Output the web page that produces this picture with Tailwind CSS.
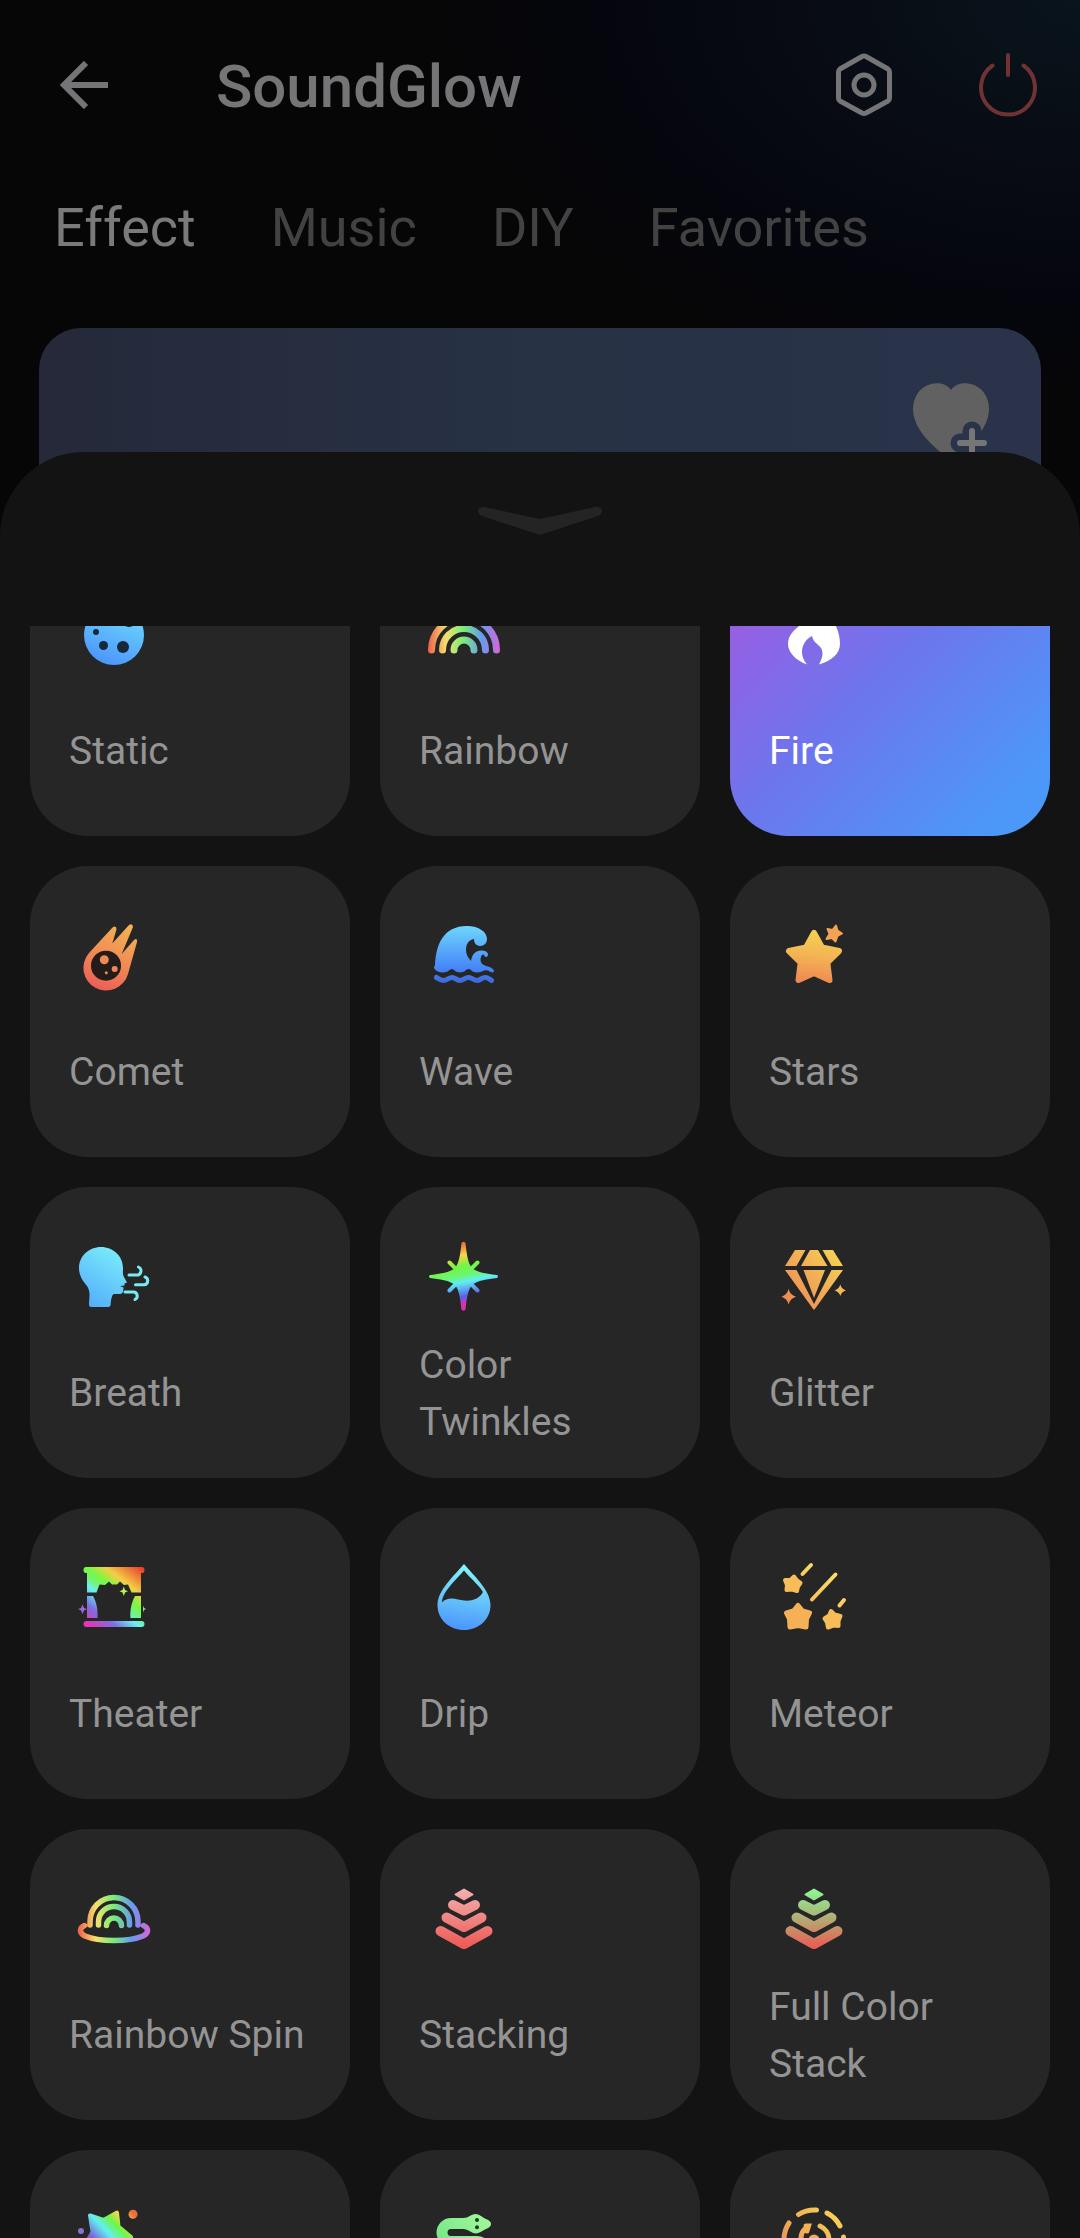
<!DOCTYPE html>
<html lang="en">
<head>
    <meta charset="UTF-8">
    <meta name="viewport" content="width=device-width, initial-scale=1.0">
    <title>SoundGlow</title>
    <script src="https://cdn.jsdelivr.net/npm/@tailwindcss/browser@4"></script>
    <style>
        body { font-family: Roboto, 'Liberation Sans', sans-serif; }
        .card { background: #262626; color: #949494; border-radius: 58px; height: 291px; padding: 45px 38px 13px 39px; display: flex; flex-direction: column; text-align: left; font-size: 39px; line-height: 57px; }
        .card.active { background: linear-gradient(135deg, #a957dc 0%, #9560e4 15%, #6e75ec 45%, #4c98f8 88%); color: #fff; }
        .card svg { width: 90px; height: 90px; flex: none; }
        .card span { flex: 1; display: flex; align-items: center; }
    </style>
</head>
<body class="h-screen overflow-hidden flex flex-col bg-[#060607] bg-[radial-gradient(ellipse_640px_400px_at_100%_0%,#09141c_0%,#080b13_45%,#05060d_75%,#060607_100%)]">

    <!-- shared gradients for the effect icons -->
    <svg class="absolute w-0 h-0" aria-hidden="true">
        <defs>
            <linearGradient id="blue" gradientUnits="userSpaceOnUse" x1="58" y1="15" x2="34" y2="76"><stop offset="0" stop-color="#6fdcff"/><stop offset="1" stop-color="#4a93fb"/></linearGradient>
            <linearGradient id="wave" gradientUnits="userSpaceOnUse" x1="45" y1="15" x2="45" y2="72"><stop offset="0" stop-color="#6fd6fd"/><stop offset=".75" stop-color="#4585f8"/><stop offset="1" stop-color="#3d68d6"/></linearGradient>
            <linearGradient id="breath" gradientUnits="userSpaceOnUse" x1="60" y1="20" x2="25" y2="76"><stop offset="0" stop-color="#7cf0fa"/><stop offset="1" stop-color="#55aefc"/></linearGradient>
            <linearGradient id="drip" gradientUnits="userSpaceOnUse" x1="52" y1="11" x2="42" y2="77"><stop offset="0" stop-color="#85fafa"/><stop offset="1" stop-color="#4b95fb"/></linearGradient>
            <linearGradient id="comet" gradientUnits="userSpaceOnUse" x1="60" y1="13" x2="32" y2="79"><stop offset="0" stop-color="#f4b454"/><stop offset=".5" stop-color="#f08f54"/><stop offset="1" stop-color="#ec5f56"/></linearGradient>
            <linearGradient id="stars" gradientUnits="userSpaceOnUse" x1="48" y1="17" x2="42" y2="74"><stop offset="0" stop-color="#f6d552"/><stop offset=".5" stop-color="#f3b354"/><stop offset="1" stop-color="#ee8453"/></linearGradient>
            <linearGradient id="gold" gradientUnits="userSpaceOnUse" x1="74" y1="18" x2="18" y2="68"><stop offset="0" stop-color="#f8d757"/><stop offset="1" stop-color="#ec8a54"/></linearGradient>
            <linearGradient id="meteor" gradientUnits="userSpaceOnUse" x1="68" y1="20" x2="22" y2="74"><stop offset="0" stop-color="#f9e065"/><stop offset="1" stop-color="#f6a552"/></linearGradient>
            <linearGradient id="arc" gradientUnits="userSpaceOnUse" x1="9" y1="45" x2="81" y2="45"><stop offset="0" stop-color="#ed604f"/><stop offset=".25" stop-color="#f5e06c"/><stop offset=".48" stop-color="#7bee78"/><stop offset=".75" stop-color="#669af0"/><stop offset="1" stop-color="#d665d8"/></linearGradient>
            <linearGradient id="twinkle" gradientUnits="userSpaceOnUse" x1="37" y1="10" x2="51" y2="79"><stop offset="0" stop-color="#ec5a3a"/><stop offset=".2" stop-color="#f3d548"/><stop offset=".35" stop-color="#72f545"/><stop offset=".48" stop-color="#6cf66c"/><stop offset=".58" stop-color="#60eef5"/><stop offset=".78" stop-color="#5b61e8"/><stop offset=".9" stop-color="#e030a8"/></linearGradient>
            <linearGradient id="prism" gradientUnits="userSpaceOnUse" x1="72" y1="14" x2="25" y2="76"><stop offset="0" stop-color="#ea3d2b"/><stop offset=".28" stop-color="#f3cf45"/><stop offset=".43" stop-color="#76f943"/><stop offset=".52" stop-color="#74f27a"/><stop offset=".62" stop-color="#6af0f8"/><stop offset=".8" stop-color="#7b6fe0"/><stop offset="1" stop-color="#e834b4"/></linearGradient>
            <linearGradient id="pop" gradientUnits="userSpaceOnUse" x1="64" y1="18" x2="22" y2="58"><stop offset="0" stop-color="#ed6c3c"/><stop offset=".2" stop-color="#f2d64a"/><stop offset=".35" stop-color="#6ef646"/><stop offset=".55" stop-color="#63eef2"/><stop offset=".8" stop-color="#7a62d8"/><stop offset="1" stop-color="#d63ab8"/></linearGradient>
            <linearGradient id="red" gradientUnits="userSpaceOnUse" x1="45" y1="15" x2="45" y2="75"><stop offset="0" stop-color="#f2b0b0"/><stop offset="1" stop-color="#ee5753"/></linearGradient>
            <linearGradient id="greenred" gradientUnits="userSpaceOnUse" x1="45" y1="15" x2="45" y2="75"><stop offset="0" stop-color="#8df895"/><stop offset=".3" stop-color="#9fcb83"/><stop offset=".6" stop-color="#bf9a6b"/><stop offset="1" stop-color="#ee5753"/></linearGradient>
            <linearGradient id="snake" gradientUnits="userSpaceOnUse" x1="70" y1="20" x2="20" y2="60"><stop offset="0" stop-color="#a5f79a"/><stop offset="1" stop-color="#6de685"/></linearGradient>
        </defs>
    </svg>

    <header class="h-[170px] shrink-0 flex items-center pl-12 pr-9 text-[#757577]">
        <button type="button" aria-label="Back" class="size-[72px] flex items-center justify-center">
            <svg class="size-12" viewBox="0 0 48 48" fill="none" stroke="currentColor" stroke-width="6"><path d="M26 2 4 24 26 46M4 24H48"/></svg>
        </button>
        <h1 class="ml-24 pt-1 flex-1 text-[60px] font-medium">SoundGlow</h1>
        <div class="flex gap-[72px]">
            <button type="button" aria-label="Settings" class="size-[72px]">
                <svg class="size-[72px]" viewBox="0 0 72 72" fill="none" stroke="currentColor" stroke-width="5" stroke-linejoin="round"><path d="M34 7.500Q36 6.500 38 7.500L60 20Q61.500 21 61.500 23V49Q61.500 51 60 52L38 64Q36 65 34 64L12 52Q10.500 51 10.500 49V23Q10.500 21 12 20Z"/><circle cx="36" cy="36" r="10"/></svg>
            </button>
            <button type="button" aria-label="Power" class="size-[72px] text-[#703233]">
                <svg class="size-[72px]" viewBox="0 0 72 72" fill="none" stroke="currentColor" stroke-width="4" stroke-linecap="round"><path d="M36 6V26M20.500 16.500A27 27 0 1 0 51.500 16.500"/></svg>
            </button>
        </div>
    </header>

    <nav class="h-[114px] shrink-0 flex items-center gap-[75px] px-[54px] text-[54px] text-[#424243]">
        <a href="#" class="text-[#7a7a7a]">Effect</a>
        <a href="#">Music</a>
        <a href="#">DIY</a>
        <a href="#">Favorites</a>
    </nav>

    <section class="mt-11 mx-[39px] h-[210px] shrink-0 rounded-[42px] flex justify-end pt-[52px] pr-[50px] bg-linear-to-r from-[#25293a] via-[#273245] to-[#2a334a]">
        <button type="button" aria-label="Add to favorites" class="size-20">
            <svg class="size-20" viewBox="0 0 80 80">
                <path fill="#616161" d="M40 10C34 2 25 3 20 4C8 7 2 18 2 29C2 48 20 66 40 80C60 66 78 48 78 29C78 18 72 7 60 4C55 3 46 2 40 10Z"/>
                <path fill="none" stroke="#29334a" stroke-width="19" stroke-linecap="round" d="M61 51V75M49 63H73"/>
                <path fill="none" stroke="#767676" stroke-width="6" stroke-linecap="round" d="M61 51V75M49 63H73"/>
            </svg>
        </button>
    </section>

    <main class="relative -mt-[86px] flex-1 min-h-0 flex flex-col rounded-t-[84px] bg-[#131313]">
        <button type="button" aria-label="Collapse" class="h-[138px] mb-9 shrink-0 flex items-center justify-center">
            <svg class="w-[124px] h-[30px]" viewBox="0 0 124 30"><path fill="#242424" d="M6 1Q0 1 0 5Q0 8 4 10L59 28Q62 29.500 65 28L120 10Q124 8 124 5Q123 0 117 1L62 13Z"/></svg>
        </button>

        <div class="flex-1 min-h-0 overflow-hidden px-[30px]">
            <!-- list is scrolled part of a row down -->
            <div class="-mt-[81px] grid grid-cols-3 gap-[30px]">
                <button type="button" class="card">
                    <svg viewBox="0 0 90 90"><circle cx="45" cy="45" r="30" fill="url(#blue)"/><g fill="#16283a"><circle cx="27" cy="42" r="3"/><circle cx="34.500" cy="55.500" r="4.500"/><circle cx="54" cy="57" r="6"/><circle cx="60" cy="30" r="7"/></g></svg>
                    <span>Static</span>
                </button>
                <button type="button" class="card">
                    <svg viewBox="0 0 90 90" fill="none" stroke="url(#arc)" stroke-width="7" stroke-linecap="round"><path d="M12.500 60A32.500 32.500 0 0 1 77.500 60M23.500 60A21.500 21.500 0 0 1 66.500 60M35 60A10 10 0 0 1 55 60"/></svg>
                    <span>Rainbow</span>
                </button>
                <button type="button" class="card active">
                    <svg viewBox="0 0 90 90" fill="#fff"><path d="M38 74.500C26 70 19 62 19 54C19 46 24 41 30 36C38 28 42 21 42 12C54 18 56 26 57 33C60 31 61 29 61 26C67 34 71 44 71 54C71 64 62 71 50 74.500C53 69 55 63 52 58C49 54 44 52 43 46C37 49 33 55 33 62C33 67 35 71 38 74.500Z"/></svg>
                    <span>Fire</span>
                </button>

                <button type="button" class="card">
                    <svg viewBox="0 0 90 90"><path fill="url(#comet)" d="M20 42L43.500 16.500Q47.500 14 47.500 18.500L43.300 32.500L59.500 14.500Q63.500 11.500 64 16L52.700 43L65 29Q68.500 26.500 68 31L59 63A22.700 22.700 0 1 1 20 42Z"/><circle cx="37" cy="54.700" r="15" fill="#241c1b"/><g fill="#f08a54"><circle cx="35.300" cy="48.700" r="4.500"/><circle cx="45.700" cy="58" r="3"/><circle cx="37.300" cy="61.700" r="1.500"/></g></svg>
                    <span>Comet</span>
                </button>
                <button type="button" class="card">
                    <svg viewBox="0 0 90 90"><path fill="url(#wave)" d="M16 54C17 34 24 15 48 15C60 15 68 21 68 28C68 32 65 35 61.500 35C58 35 55 33 55 28C49 29 47 34 47 39C47 43 49 47 52 50C53 43 57 39.500 62 39.500C66 39.500 69 41 69 43.500C69 45 68 46 67 46C65 46 66 43.500 64 43.500C62 44 61.500 47 61.500 49C62 54 66 54.500 69 55.500C73 57 75 58 75 60.500C74 62.500 71 61 69 59.500C65 58 63 61.500 58 61.500C53 61.500 52 58 49.500 58C47 58 46 61.500 41 61.500C36 61.500 35 58 33 58C31 58 29 61.500 24 61.500C19 61.500 15 59 15 56Z"/><path fill="none" stroke="url(#wave)" stroke-width="5" stroke-linecap="round" d="M17.500 66.500C20 68 21 69.500 24.500 69.500S30 66.500 33 66.500S38 69.500 41 69.500S46 66.500 49.500 66.500S55 69.500 58 69.500S63 66.500 66 66.500S70 68 72.500 69.500"/></svg>
                    <span>Wave</span>
                </button>
                <button type="button" class="card">
                    <svg viewBox="0 0 90 90" fill="url(#stars)" stroke="url(#stars)" stroke-linejoin="round"><path stroke-width="6" d="M45 22L53 36.500L70 40L58.300 51.500L60.500 69L45 62L29.500 69L31.700 51.500L20 40L37 36.500Z"/><path fill="#f2a354" stroke="#f2a354" stroke-width="2" d="M67 14.500L68.500 19.500L73 22.500L68.500 25L66.500 30.500L63 27L57.500 28L60.500 23L58.500 18L63.500 19Z"/></svg>
                    <span>Stars</span>
                </button>

                <button type="button" class="card">
                    <svg viewBox="0 0 90 90"><path fill="url(#breath)" d="M20 72C20 66 22 60 18 54C13 48 10 43 10 36C10 24 20 15 32 15C44 15 54 24 54 36C54 41 53.500 42 55 45L58 50.500L55.500 51.500L55.500 53.500L51 54L54.500 55.500C54.500 61 53 62 50 62L45 62C43 62 42 68 41.700 72Q41.700 75 39 75L22 75Q20 75 20 72Z"/><path fill="none" stroke="#7aeaf5" stroke-width="3" stroke-linecap="round" d="M60 43H69A4.300 4.300 0 0 0 69.500 35M66.500 52.700H75.500A4 4 0 0 0 76 45M56 60H65A4 4 0 0 1 66 67.500"/></svg>
                    <span>Breath</span>
                </button>
                <button type="button" class="card">
                    <svg viewBox="0 0 90 90" fill="url(#twinkle)"><path d="M42.500 11Q44.500 8.500 46.500 11C47.500 20 48.500 31 53 36C58 40.500 69 42 78 43Q80 44.500 78 46C69 47 58 48.500 53 53C48.500 58 47.500 69 46.500 77.500Q44.500 80 42.500 77.500C41.500 69 40.500 58 36 53C31 48.500 20 47 11 46Q9 44.500 11 43C20 42 31 40.500 36 36C40.500 31 41.500 20 42.500 11Z"/><path fill="none" stroke="url(#twinkle)" stroke-width="4" stroke-linecap="round" d="M30.500 30.500L58.500 58.500M58.500 30.500L30.500 58.500"/></svg>
                    <span>Color Twinkles</span>
                </button>
                <button type="button" class="card">
                    <svg viewBox="0 0 90 90" fill="url(#gold)"><path d="M26 18H36.500L27.500 34H16ZM41 18H49L58.500 34H32ZM53.500 18H64L74 34H62.500ZM16 38H27.500L45 72L62.500 38H74L45.500 77.500H44.500ZM34.500 38H56L45 66ZM19.600 57Q21 63 27 64.700Q21 66.500 19.600 72.500Q18 66.500 12.500 64.700Q18 63 19.600 57ZM71.300 52.500Q72.500 57 77 58.300Q72.500 60 71.300 64Q70 60 65.500 58.300Q70 57 71.300 52.500Z"/></svg>
                    <span>Glitter</span>
                </button>

                <button type="button" class="card">
                    <svg viewBox="0 0 90 90" fill="url(#prism)"><path d="M17 14H73Q75.500 14 75.500 17T73 20H72V39.500H62.500L59 31.500L55 32L51 28.500L48 31.500H43L40 28.500L36 32L30.500 31.500L27.500 39.500H18V20H17Q14.500 20 14.500 17T17 14ZM18 43H24C28 50 29 58 28.500 65H18ZM72 43H66C62 50 61 58 61.500 65H72ZM17.500 68H72.500Q75.500 68 75.500 71T72.500 74H17.500Q14.500 74 14.500 71T17.500 68Z"/><path d="M54.800 33.500L56 37L59 38.300L56 39.500L54.800 43L53.500 39.500L50.500 38.300L53.500 37Z" fill="#b6f25c"/><path d="M13.500 51.500L15 55L18 56L15 57.500L13.500 61L12 57.500L9 56L12 55Z" fill="#9a68d6"/><path d="M74 52.500L75 55L77 56L75 57L74 59.500Z" fill="#7bf06b"/></svg>
                    <span>Theater</span>
                </button>
                <button type="button" class="card">
                    <svg viewBox="0 0 90 90" fill="url(#drip)"><path fill-rule="evenodd" d="M45 11C54 22 71.500 37 71.500 52C71.500 67 59 77 45 77S18.500 67 18.500 52C18.500 37 36 22 45 11ZM45 17.500C37 27 23 39 23 49.500C27 45 33 45 39 46.500C49 49 59 48 64 39C59 31 51 25 45 17.500Z"/></svg>
                    <span>Drip</span>
                </button>
                <button type="button" class="card">
                    <svg viewBox="0 0 90 90" fill="#f6bd58" stroke="#f6bd58" stroke-linejoin="round" stroke-linecap="round"><path stroke-width="4" stroke="url(#meteor)" fill="none" d="M33.500 21L42 12M43 46.500L66.500 21.500M70.500 52.500L75 47"/><path stroke-width="4" d="M25 23.500L28 27.500L31.500 30L29 33.500L28 38L23 36.500L17.500 37L18 32L16 27L21.500 27Z"/><path fill="#f6b156" stroke="#f6b156" stroke-width="5" d="M29 52.500L33.500 58L40.500 60L37.500 66L37 74L29 72.500L21 74L20.500 66L17.500 60L24.500 58Z"/><path stroke-width="4" d="M62 58L65.500 61.500L71.500 63L69.500 68L69.500 73L64.500 72.500L59 74.500L58 69.500L55.500 65.500L60 62.500Z"/></svg>
                    <span>Meteor</span>
                </button>

                <button type="button" class="card">
                    <svg viewBox="0 0 90 90" fill="none" stroke="url(#arc)" stroke-width="5.500" stroke-linecap="round"><path d="M21 51V47.500A24 24 0 0 1 69 47.500V51M29.500 51V48A15.500 15.500 0 0 1 60.500 48V51M37.500 51.500A7.500 7.500 0 0 1 52.500 51.500M15.500 51.500C10 54 10 59 16 62C30 68 60 68 74 62C80 59 80 54 74.500 51.500"/></svg>
                    <span>Rainbow Spin</span>
                </button>
                <button type="button" class="card">
                    <svg viewBox="0 0 90 90" fill="none" stroke="url(#red)" stroke-width="10" stroke-linecap="round" stroke-linejoin="round"><path fill="url(#red)" stroke-width="2" d="M45 15.500L53.500 20.500L45 25.500L36.500 20.500Z"/><path d="M34 31L45 36.500L56 31M27.500 43.500L45 53L62.500 43.500M21.500 57L45 70L68.500 57"/></svg>
                    <span>Stacking</span>
                </button>
                <button type="button" class="card">
                    <svg viewBox="0 0 90 90" fill="none" stroke="url(#greenred)" stroke-width="10" stroke-linecap="round" stroke-linejoin="round"><path fill="url(#greenred)" stroke-width="2" d="M45 15.500L53.500 20.500L45 25.500L36.500 20.500Z"/><path d="M34 31L45 36.500L56 31M27.500 43.500L45 53L62.500 43.500M21.500 57L45 70L68.500 57"/></svg>
                    <span>Full Color Stack</span>
                </button>

                <button type="button" class="card">
                    <svg viewBox="0 0 90 90" fill="url(#pop)"><path stroke="url(#pop)" stroke-width="4" stroke-linejoin="round" d="M21 20.500L34.500 25L48 17.500L49.500 31.500L62 42L48 47L42 62L32 51L15 52L23.500 37Z"/><circle cx="64" cy="19.300" r="4.500"/><circle cx="12" cy="36" r="3" fill="#8a70d4"/></svg>
                </button>
                <button type="button" class="card">
                    <svg viewBox="0 0 90 90"><path fill="none" stroke="url(#snake)" stroke-width="11" d="M50 28.500H32A8.500 8.500 0 0 0 32 46.500H58A8.500 8.500 0 0 1 58 64H20"/><path fill="url(#snake)" d="M44 23C50 23 52 19 56.500 19C60 19 63 22 67 24Q72 26 72 29T67 34C63 36 60 38.500 57 38.500C52 38.500 50 34 44 34Z"/><circle cx="58" cy="25" r="2" fill="#1f3a24"/><circle cx="58" cy="32.300" r="2" fill="#1f3a24"/></svg>
                </button>
                <button type="button" class="card">
                    <svg viewBox="0 0 90 90" fill="none" stroke="url(#gold)" stroke-width="5" stroke-linecap="round"><path d="M29.500 19.500A30 30 0 0 1 47.500 15M58 18A30 30 0 0 1 71 31M74.500 42A30 30 0 0 1 73 55M20 28A30 30 0 0 0 15 45M32 45A14 14 0 0 1 38.500 32M37 31H39.500L38 36M51 31A15 15 0 0 1 60 45"/><circle cx="45" cy="45" r="5.500" fill="#edae55" stroke="none"/></svg>
                </button>
            </div>
        </div>
    </main>
</body>
</html>
